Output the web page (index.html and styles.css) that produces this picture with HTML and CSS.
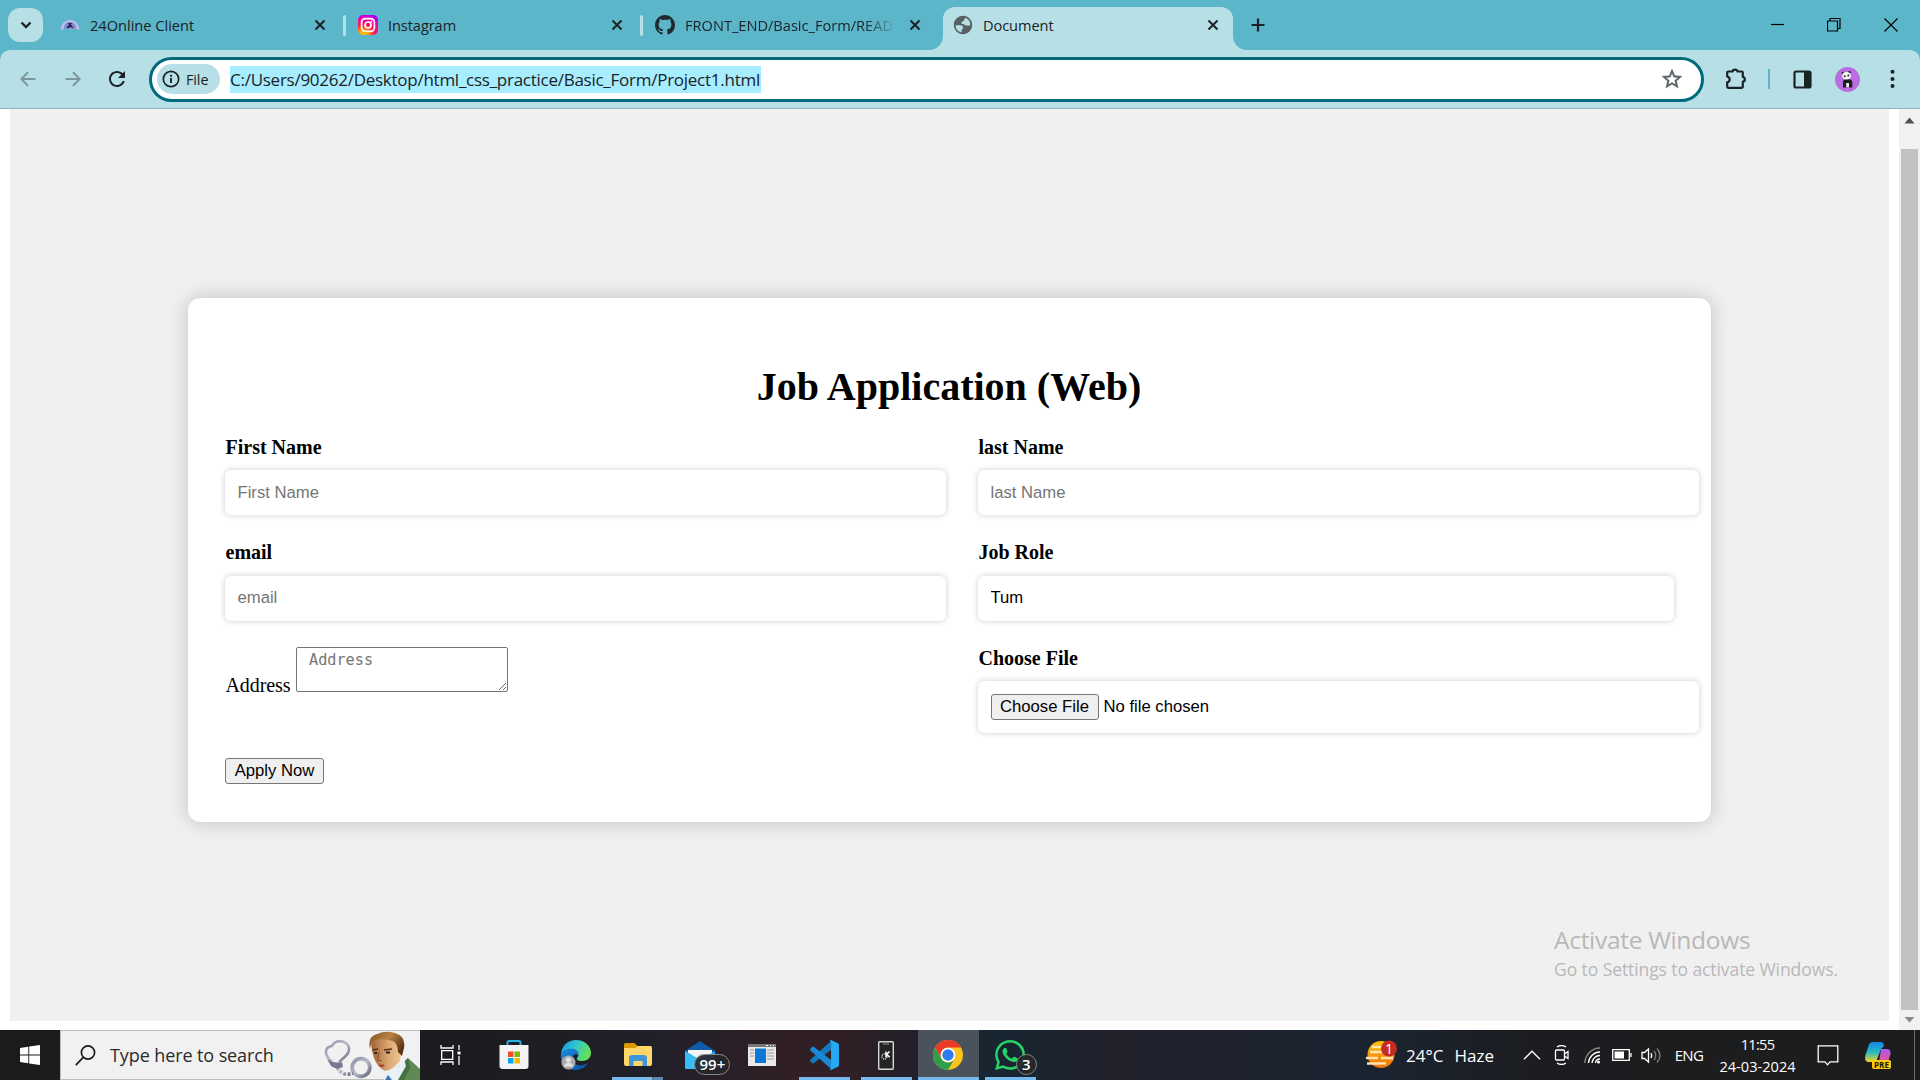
FILE: index.html
```html
<!DOCTYPE html>
<html lang="en">
<head>
<meta charset="utf-8">
<title>Document</title>
<link rel="stylesheet" href="styles.css">
</head>
<body>
<div class="screen">
  <header class="tabstrip">
    <button class="tab-search" aria-label="Search tabs"><svg width="12" height="8" viewBox="0 0 12 8"><path d="M1.5 1.5 6 6l4.500-4.500" fill="none" stroke="#1f2426" stroke-width="2.400"/></svg></button>
    <div class="tab">
      <svg class="favicon" width="20" height="20" viewBox="0 0 20 20"><path d="M.5 15C1 8.500 5 5 10 5s9 3.500 9.500 10l-5-1.500-4.500 1-4.500-1z" fill="#b9bdec"/><path d="M4 13.800c0-4 2-6.800 6-6.800s6 2.800 6 6.800z" fill="#8488cf"/><path d="M7 13l3-4.500 3 4.500-2-1.500-2 1zM8 8.500h4" fill="#23264f" stroke="#23264f" stroke-width=".8"/></svg>
      <span class="tab-title t1">24Online Client</span>
      <svg class="close" viewBox="0 0 16 16"><path d="M3.500 3.500l9 9m0-9l-9 9"/></svg>
    </div>
    <i class="sep"></i>
    <div class="tab">
      <svg class="favicon" width="20" height="20" viewBox="0 0 20 20"><defs><radialGradient id="ig" cx=".25" cy="1.050" r="1.150"><stop offset="0" stop-color="#ffd500"/><stop offset=".25" stop-color="#ff9a00"/><stop offset=".5" stop-color="#ff1a55"/><stop offset=".75" stop-color="#f400a8"/><stop offset="1" stop-color="#a000ff"/></radialGradient></defs><rect width="20" height="20" rx="5" fill="url(#ig)"/><g fill="none" stroke="#fff" stroke-width="1.700"><rect x="3.600" y="3.600" width="12.800" height="12.800" rx="3.800"/><circle cx="10" cy="10" r="3"/></g><circle cx="13.500" cy="6.500" r=".9" fill="#fff"/></svg>
      <span class="tab-title t2">Instagram</span>
      <svg class="close" viewBox="0 0 16 16"><path d="M3.500 3.500l9 9m0-9l-9 9"/></svg>
    </div>
    <i class="sep"></i>
    <div class="tab">
      <svg class="favicon" width="20" height="20" viewBox="0 0 16 16"><path fill="#1f2a30" d="M8 0C3.580 0 0 3.580 0 8c0 3.540 2.290 6.530 5.470 7.590.4.070.55-.17.55-.38 0-.19-.01-.82-.01-1.490-2.010.37-2.530-.49-2.690-.94-.09-.23-.48-.94-.82-1.130-.28-.15-.68-.52-.01-.53.63-.01 1.080.58 1.230.82.72 1.210 1.870.87 2.330.66.070-.52.28-.87.51-1.070-1.780-.2-3.640-.89-3.640-3.950 0-.87.31-1.590.82-2.150-.08-.2-.36-1.020.08-2.120 0 0 .67-.21 2.200.82.64-.18 1.320-.27 2-.27.68 0 1.360.09 2 .27 1.530-1.040 2.200-.82 2.200-.82.44 1.100.16 1.920.08 2.120.51.56.82 1.270.82 2.150 0 3.070-1.870 3.750-3.650 3.950.29.25.54.73.54 1.480 0 1.070-.01 1.930-.01 2.200 0 .21.15.46.55.38A8.013 8.013 0 0016 8c0-4.420-3.580-8-8-8z"/></svg>
      <span class="tab-title t3">FRONT_END/Basic_Form/READ</span>
      <svg class="close" viewBox="0 0 16 16"><path d="M3.500 3.500l9 9m0-9l-9 9"/></svg>
    </div>
    <div class="tab active">
      <svg class="flare" viewBox="0 0 14 14"><path d="M14 0v14H0A14 14 0 0014 0z"/></svg>
      <svg class="favicon globe" width="22" height="22" viewBox="0 0 24 24"><path fill="#5a5f63" d="M12 2C6.480 2 2 6.480 2 12s4.480 10 10 10 10-4.480 10-10S17.520 2 12 2zM4 12.300h5c2.600 0 3 1 3 2.400 0 1.300-.5 1.700-1.500 2.100v3.300C6.500 19.700 3.800 16 4 12.300zm11.200.2c-1.300 0-1.700-1.500-3.100-1.500-1 0-1.800-.4-1.800-1.500 0-1 .8-1.500 1.800-1.600 1.200-.2 1.300-1.200 1.400-2.900l1.700-.7c3.200 1.300 4.900 4.200 4.800 8.200h-2c-.8 0-1.500 0-2.800 0z"/></svg>
      <span class="tab-title t4">Document</span>
      <svg class="close" viewBox="0 0 16 16"><path d="M3.500 3.500l9 9m0-9l-9 9"/></svg>
      <svg class="flare flare-right" viewBox="0 0 14 14"><path d="M0 0v14h14A14 14 0 010 0z"/></svg>
    </div>
    <svg class="new-tab" width="14" height="14" viewBox="0 0 14 14"><path d="M7 .5v13M.5 7h13" stroke="#1b2226" stroke-width="2.200"/></svg>
    <div class="win-controls">
      <svg width="14" height="14" viewBox="0 0 14 14"><path d="M1 6.500h13" /></svg>
      <svg width="14" height="14" viewBox="0 0 14 14"><path d="M.5 3h10v10H.5zM3 3V.5h10v10h-2.500"/></svg>
      <svg width="14" height="14" viewBox="0 0 14 14"><path d="M.5.5l13 13m0-13l-13 13"/></svg>
    </div>
  </header>

  <div class="toolbar-wrap">
  <div class="toolbar">
    <svg class="nav-icon dim" width="16" height="16" viewBox="0 0 16 16"><path d="M15.500 8H1.500M8 1.200L1.300 8 8 14.800"/></svg>
    <svg class="nav-icon dim" width="16" height="16" viewBox="0 0 16 16"><path d="M.5 8h14M8 1.200L14.700 8 8 14.800"/></svg>
    <svg class="reload" width="24" height="24" viewBox="0 0 24 24"><path fill="#1b2226" d="M17.650 6.350C16.200 4.900 14.210 4 12 4c-4.420 0-7.990 3.580-7.990 8s3.570 8 7.990 8c3.730 0 6.840-2.550 7.730-6h-2.080c-.82 2.330-3.040 4-5.650 4-3.310 0-6-2.690-6-6s2.690-6 6-6c1.660 0 3.140.69 4.220 1.780L13 11h7V4l-2.350 2.350z"/></svg>
    <div class="omnibox">
      <div class="chip"><svg width="18" height="18" viewBox="0 0 18 18"><circle cx="9" cy="9" r="7.700" fill="none" stroke="#1b2226" stroke-width="1.700"/><path d="M9 8v5M9 4.800v1.900" stroke="#1b2226" stroke-width="1.900"/></svg><span>File</span></div>
      <span class="url">C:/Users/90262/Desktop/html_css_practice/Basic_Form/Project1.html</span>
      <svg class="star" width="24" height="24" viewBox="0 0 24 24"><path fill="#5c6164" stroke="#5c6164" stroke-width=".4" d="M22 9.240l-7.190-.62L12 2 9.190 8.630 2 9.240l5.460 4.730L5.820 21 12 17.270 18.180 21l-1.630-7.030L22 9.240zM12 15.400l-3.760 2.270 1-4.280-3.320-2.880 4.380-.38L12 6.100l1.710 4.040 4.380.38-3.320 2.880 1 4.280L12 15.400z"/></svg>
    </div>
    <svg class="puzzle" width="22" height="22" viewBox="0 0 22 22"><path d="M2.200 4.500q0-1 1-1H7.500C7.800 1 12.200 1 12.500 3.500h4.300q1 0 1 1V9C20.500 9.300 20.500 13.500 17.800 13.700v5.100q0 1-1 1H3.200q-1 0-1-1v-4.500C5.500 13.500 5.500 9.300 2.200 8.500z" fill="none" stroke="#1b2226" stroke-width="2.200" stroke-linejoin="round"/></svg>
    <i class="tool-sep"></i>
    <svg class="panel" width="19" height="19" viewBox="0 0 19 19"><rect x="1.500" y="1.500" width="16" height="16" rx="1.500" fill="none" stroke="#1b2226" stroke-width="2.200"/><path d="M11 1h6.500v17H11z" fill="#1b2226"/></svg>
    <svg class="avatar" width="25" height="25" viewBox="0 0 25 25"><circle cx="12.500" cy="12.500" r="12.500" fill="#b86ee0"/><path d="M8 20.500V15q0-3 4.500-3t4.800 3v5.500h-3.300V16h-2.700v4.500z" fill="#1c1c1c"/><path d="M11.300 16H14v4h-2.700z" fill="#eee"/><circle cx="8" cy="6" r="1.300" fill="#222"/><circle cx="14.500" cy="5.200" r="1.300" fill="#222"/><ellipse cx="11.500" cy="8.800" rx="4.400" ry="3.800" fill="#f4f4f4"/><circle cx="9.700" cy="9.200" r="1" fill="#222"/><circle cx="13.300" cy="8.600" r="1" fill="#222"/></svg>
    <svg class="dots" width="5" height="20" viewBox="0 0 5 20" fill="#1b2226"><circle cx="2.500" cy="2.700" r="2"/><circle cx="2.500" cy="10" r="2"/><circle cx="2.500" cy="17" r="2"/></svg>
  </div>
  </div>

  <div class="viewport">
    <main class="page">
      <section class="hero">
        <form class="card">
          <h1>Job Application (Web)</h1>
          <div class="fields">
            <div class="field"><label>First Name</label><input type="text" placeholder="First Name"></div>
            <div class="field"><label>last Name</label><input type="text" placeholder="last Name"></div>
            <div class="field"><label>email</label><input type="text" placeholder="email"></div>
            <div class="field"><label>Job Role</label><select><option>Tum</option></select></div>
            <div class="address"><span>Address</span><textarea placeholder=" Address"></textarea></div>
            <div class="field"><label>Choose File</label><input type="file"></div>
          </div>
          <button class="apply" type="button">Apply Now</button>
        </form>
      </section>
    </main>
    <aside class="scrollbar">
      <svg width="21" height="40" viewBox="0 0 21 40"><path d="M5.500 14.500L10.500 8.500l5 6z" fill="#505050"/></svg>
      <div class="thumb"></div>
      <svg width="21" height="20" viewBox="0 0 21 20"><path d="M5.500 7l5 5.500 5-5.500z" fill="#8a8a8a"/></svg>
    </aside>
    <div class="watermark"><p class="wm-title">Activate Windows</p><p class="wm-sub">Go to Settings to activate Windows.</p></div>
  </div>

  <footer class="taskbar">
    <div class="start"><svg width="20" height="20" viewBox="0 0 20 20" fill="#fff"><path d="M0 3l8.300-1.200v7.700H0zM9.200 1.600L20 0v9.500H9.200zM0 10.500h8.300v7.700L0 17zM9.200 10.500H20V20L9.200 18.400z"/></svg></div>
    <div class="search">
      <svg width="21" height="21" viewBox="0 0 21 21"><circle cx="13" cy="7.500" r="6.600" fill="none" stroke="#1c1c1c" stroke-width="1.700"/><path d="M8.500 12.200L.8 20.200" stroke="#1c1c1c" stroke-width="1.700"/></svg>
      <span>Type here to search</span>
      <svg class="doodle" width="100" height="49" viewBox="0 0 100 49">
        <defs><linearGradient id="mt" x1="0" x2="1" y2="1"><stop stop-color="#8d8fa5"/><stop offset=".5" stop-color="#b9bac8"/><stop offset="1" stop-color="#62647c"/></linearGradient>
        <linearGradient id="sk" x1="0" x2="1"><stop stop-color="#9d6238"/><stop offset=".55" stop-color="#dba672"/><stop offset="1" stop-color="#efc896"/></linearGradient>
        <linearGradient id="hr" x1="0" x2="1" y2=".6"><stop stop-color="#7c4b1f"/><stop offset=".5" stop-color="#b98445"/><stop offset="1" stop-color="#5b3210"/></linearGradient></defs>
        <g fill="none" stroke="url(#mt)"><path d="M12 31C3 23 5 16 12 15 16 7 29 10 29 18c0 6-5 8-10 13" stroke-width="2.600"/><circle cx="41" cy="36.500" r="8.800" stroke-width="3.800"/><path d="M17 36q5 10 16 6" stroke-width="3.500" stroke-dasharray="3 1.500"/></g>
        <path d="M7 28q7 5 15 3l1 5q-7 3-12-1z" fill="#777991"/>
        <path d="M65 49l8-9 15-13 12 11v11z" fill="#5f8a54"/><path d="M73 49l5-8 10-14 2 10-6 12z" fill="#45703f"/><path d="M64 49l3-8 12-6 5-7 2 7-8 14z" fill="#e8f0f8"/><path d="M65 49l3-5 4 5z" fill="#3d74b8"/>
        <path d="M51 11q4-6 16-6 14 0 15 8l-2 17-7 7q-6 4-10 2-6-4-9-12-3-8-3-16z" fill="url(#sk)"/>
        <path d="M50 18q-3-12 7-15 9-4 18-1 11 3 9 15l-2 8-4-4q0-8-5-11-9-3-18-1-4 2-5 9z" fill="url(#hr)"/>
        <path d="M53 19l5-1M64 19l8-1" stroke="#532c12" stroke-width="1.600"/><path d="M54.500 22h2.500M66 21.500h4" stroke="#29211d" stroke-width="1.800"/><path d="M59 21l-1.500 8 4 1" fill="none" stroke="#8a5433" stroke-width="1.200"/><path d="M58 34.500q4-2 7 0l-3 1.500z" fill="#9c3a2c"/>
      </svg>
    </div>
    <nav class="apps">
      <div class="app first"><svg width="21" height="20" viewBox="0 0 21 20" fill="none" stroke="#fff" stroke-width="1.300"><path d="M1 0v3h12V0M1 20v-3h12v3M1.700 5.700h11v8.600H1.700zM19 0v5M19 11v9"/><path d="M17.500 6.500h3v3h-3z" fill="#fff" stroke="none"/></svg></div>
      <div class="app"><svg width="30" height="30" viewBox="0 0 30 30"><path d="M8.500 7V2.500q0-1.500 1.500-1.500h10q1.500 0 1.500 1.500V7" fill="none" stroke="#27b1e8" stroke-width="2"/><path d="M.5 5h29v21q0 3-3 3h-23q-3 0-3-3z" fill="#f4f4f4"/><path d="M9 11.500h5.500V17H9z" fill="#f25022"/><path d="M15.500 11.500H21V17h-5.500z" fill="#7fba00"/><path d="M9 18h5.500v5.500H9z" fill="#00a4ef"/><path d="M15.500 18H21v5.500h-5.500z" fill="#ffb900"/></svg></div>
      <div class="app"><svg width="30" height="30" viewBox="0 0 30 30"><defs><linearGradient id="e1" x1="0" x2="1" y2=".3"><stop stop-color="#1593d8"/><stop offset=".5" stop-color="#30c3d5"/><stop offset="1" stop-color="#63df5c"/></linearGradient><linearGradient id="e2" x2="1" y2="1"><stop stop-color="#1b8be0"/><stop offset="1" stop-color="#0b4e9c"/></linearGradient></defs><path d="M0 14C1 5 7 0 15 0c9 0 15 6 15 13 0 5-4 8-9 8-4 0-6-1-5-3 3-3 1-8-4-8C7 10 3 11 0 14z" fill="url(#e1)"/><path d="M0 14c2-4 8-6 12-5 4 0 6 4 5 6-2-2-6 0-6 4 0 5 7 9 16 4-3 5-8 7-12 7C6 30-1 23 0 14z" fill="url(#e2)"/><circle cx="7.500" cy="22.500" r="7" fill="#a9abae"/><circle cx="7.500" cy="20" r="2.600" fill="#e2e2e2"/><path d="M3 26.500c0-5 9-5 9 0z" fill="#e2e2e2"/></svg></div>
      <div class="app open stacked"><svg width="28" height="24" viewBox="0 0 28 24"><path d="M0 1.500Q0 0 1.500 0h9l3 3H26q2 0 2 2v4H0z" fill="#d99a00"/><path d="M0 5h11l3-2h12q2 0 2 2v16q0 2-2 2H2q-2 0-2-2z" fill="#ffd667"/><path d="M5 23v-8q0-3 3-3h12q3 0 3 3v8h-4.500v-5h-9v5z" fill="#3e97dc"/></svg></div>
      <div class="app"><svg width="30" height="30" viewBox="0 0 30 30"><path d="M0 11L15 1l15 10v5H0z" fill="#0f5ba8"/><path d="M3 10h24v12H3z" fill="#f2f4f6"/><path d="M0 11l15 9 15-9v16.500q0 1.500-1.500 1.500h-27Q0 29 0 27.500z" fill="#27a7e8"/><path d="M0 11l30 18H1.500Q0 29 0 27.500z" fill="#35bdf4"/></svg><b class="badge wide">99+</b></div>
      <div class="app"><svg width="28" height="22" viewBox="0 0 28 22"><path d="M0 0h28v22H0z" fill="#e9e9e9"/><path d="M0 0h28v3H0z" fill="#777"/><path d="M18 1.500h2m2 0h1m2 0h1" stroke="#fff"/><path d="M2 6h4M2 9h4M2 12h4M19 6h7M19 9h7M19 12h7M19 15h7" stroke="#999"/><path d="M7 4.500h11v14.500H7z" fill="#0b78d8"/></svg></div>
      <div class="app open"><svg width="30" height="30" viewBox="0 0 30 30"><path d="M22 1L1.500 19.500q-1 1 0 2L3 23q1 .8 2 0L22 10z" fill="#1478be"/><path d="M22 29L1.500 10.500q-1-1 0-2L3 7q1-.8 2 0l17 13z" fill="#1a8ad4"/><path d="M22 0l7 3.300q1 .5 1 1.700v20q0 1.200-1 1.700L22 30q-1 0-1.500-1 1.500.5 1.500-1.500v-25q0-2-1.500-1.500Q21 0 22 0z" fill="#27a9f2"/></svg></div>
      <div class="app open"><svg width="16" height="29" viewBox="0 0 16 29"><rect x=".7" y=".7" width="14.600" height="27.600" rx="1" fill="#242424" stroke="#d8d8d8" stroke-width="1.400"/><circle cx="6.500" cy="15.500" r="2.600" fill="none" stroke="#ccc" stroke-width="1.300" stroke-dasharray="1.300 .9"/><path d="M8 10.500v6M11.500 10.500L8.700 13.300l3 3" fill="none" stroke="#fff" stroke-width="1.500"/><path d="M5 3h6" stroke="#999"/></svg></div>
      <div class="app open current"><svg width="30" height="30" viewBox="0 0 30 30"><circle cx="15" cy="15" r="15" fill="#fcc31e"/><path d="M2 7.500A15 15 0 0128 7.500H15a7.500 7.500 0 00-6.500 11.200z" fill="#e8392b"/><path d="M2 7.500l6.500 11.250A7.500 7.500 0 0021.500 18.750L15 30A15 15 0 012 7.500z" fill="#2f9e4c"/><circle cx="15" cy="15" r="7.300" fill="#fff"/><circle cx="15" cy="15" r="5.700" fill="#2f7bee"/></svg></div>
      <div class="app open"><svg width="30" height="30" viewBox="0 0 24 24"><path fill="#25d366" d="M17.472 14.382c-.297-.149-1.758-.867-2.030-.967-.273-.099-.471-.148-.67.15-.197.297-.767.966-.94 1.164-.173.199-.347.223-.644.075-.297-.15-1.255-.463-2.390-1.475-.883-.788-1.480-1.761-1.653-2.059-.173-.297-.018-.458.13-.606.134-.133.298-.347.446-.52.149-.174.198-.298.298-.497.099-.198.050-.371-.025-.52-.075-.149-.669-1.612-.916-2.207-.242-.579-.487-.5-.669-.51-.173-.008-.371-.01-.57-.01-.198 0-.52.074-.792.372-.272.297-1.040 1.016-1.040 2.479 0 1.462 1.065 2.875 1.213 3.074.149.198 2.096 3.200 5.077 4.487.709.306 1.262.489 1.694.625.712.227 1.360.195 1.871.118.571-.085 1.758-.719 2.006-1.413.248-.694.248-1.289.173-1.413-.074-.124-.272-.198-.57-.347m-5.421 7.403h-.004a9.870 9.870 0 01-5.031-1.378l-.361-.214-3.741.982.998-3.648-.235-.374a9.860 9.860 0 01-1.510-5.260c.001-5.450 4.436-9.884 9.888-9.884 2.640 0 5.122 1.030 6.988 2.898a9.825 9.825 0 012.893 6.994c-.003 5.450-4.437 9.884-9.885 9.884m8.413-18.297A11.815 11.815 0 0012.050 0C5.495 0 .16 5.335.157 11.892c0 2.096.547 4.142 1.588 5.945L.057 24l6.305-1.654a11.882 11.882 0 005.683 1.448h.005c6.554 0 11.890-5.335 11.893-11.893a11.821 11.821 0 00-3.480-8.413z"/></svg><b class="badge">3</b></div>
    </nav>
    <div class="tray">
      <div class="weather"><svg width="32" height="30" viewBox="0 0 32 30"><defs><linearGradient id="sun" x2="0" y2="1"><stop stop-color="#ffc400"/><stop offset="1" stop-color="#f07010"/></linearGradient></defs><circle cx="15" cy="14.500" r="13.500" fill="url(#sun)"/><path d="M6 7h10M4 12h14M0 18h12M15 18h12M1 23.500h19" stroke="#ffe3b0" stroke-width="2.300"/><circle cx="23" cy="8.500" r="8" fill="#c62b21"/><text x="23" y="13.500" text-anchor="middle" class="alert">1</text></svg><span class="temp">24°C</span><span class="haze">Haze</span></div>
      <div class="cell"><svg width="18" height="10" viewBox="0 0 18 10"><path d="M1 9.200L9 1.200l8 8"/></svg></div>
      <div class="cell"><svg width="16" height="20" viewBox="0 0 16 20"><rect x="1.500" y="5" width="9" height="10" rx="1"/><path d="M10.500 9l3.500-2.500v7L10.500 11M3 2q4.500-3 9 0M3 18q4.500 3 9 0"/></svg></div>
      <div class="cell"><svg width="17" height="17" viewBox="0 0 17 17"><path d="M.8 16A15.500 15.500 0 0116 1" stroke="#8b8b8b"/><path d="M4.500 16A11.500 11.500 0 0116 5M8 16a8 8 0 018-7.500"/><path d="M11.500 16a4.500 4.500 0 014.500-4"/><circle cx="14.500" cy="15" r="1.500" fill="#fff" stroke="none"/></svg></div>
      <div class="cell narrow"><svg width="20" height="12" viewBox="0 0 20 12"><path d="M.7.7h16.600v10.600H.7zM19 4v4"/><path d="M2.500 2.500h9.500v7H2.500z" fill="#fff" stroke="none"/></svg></div>
      <div class="cell"><svg width="21" height="17" viewBox="0 0 21 17"><path d="M1 5.500h2.500L7.500 2v13L3.500 11.500H1z"/><path d="M10 6q1.500 2.500 0 5"/><path d="M13 4q3.500 4.500 0 9M16 1.500q6 7 0 14" stroke="#808080"/></svg></div>
      <span class="lang">ENG</span>
      <div class="clock"><span class="time">11:55</span><span class="date">24-03-2024</span></div>
      <div class="note"><svg width="22" height="21" viewBox="0 0 22 21"><path d="M1.200.8h19.600v16H13l-2.500 3-2.500-3H1.200z"/></svg></div>
      <div class="copilot"><svg width="26" height="26" viewBox="0 0 26 26"><defs><linearGradient id="c1" x2="0" y2="1"><stop stop-color="#1686e8"/><stop offset=".5" stop-color="#25b9c4"/><stop offset="1" stop-color="#f4d51c"/></linearGradient><linearGradient id="c2" x2="0" y2="1"><stop stop-color="#a55cf0"/><stop offset="1" stop-color="#f0568e"/></linearGradient></defs><path d="M7 0h9q2.500 0 3 4l-3 3-5 13H3q-4-1-2.500-7L4 2.500Q5 0 7 0z" fill="url(#c1)"/><path d="M16 7h6q4 0 3.500 5l-2.500 8h-9z" fill="url(#c2)"/></svg><b class="pre">PRE</b></div>
      <i class="peek"></i>
    </div>
  </footer>
</div>
</body>
</html>
```
FILE: styles.css
```css
* { box-sizing: border-box; }
body { margin: 0; overflow: hidden; font-family: "Open Sans", "Noto Sans", sans-serif; color: #1b2226; }
p, h1 { margin: 0; }
svg { display: block; flex: none; }
.screen { width: 1920px; height: 1080px; display: flex; flex-direction: column; overflow: hidden; background: #fff; }

/* tab strip */
.tabstrip { height: 50px; background: #5cb6c9; display: flex; align-items: center; padding-left: 8px; flex: none; }
.tab-search { width: 35px; height: 34px; border: 0; padding: 0; border-radius: 12px; background: #b7e0e6; display: grid; place-items: center; margin-right: 6px; }
.tab { position: relative; width: 294px; height: 50px; display: flex; align-items: center; padding: 0 15px 8px 11px; gap: 10px; font-size: 14.600px; }
.favicon { position: relative; top: 4px; }
.close { position: relative; top: 4px; width: 16px; height: 16px; margin-left: auto; stroke: #1b2226; stroke-width: 2; }
.tab-title { position: relative; top: 4px; white-space: nowrap; line-height: 22px; }
.t2, .t4 { letter-spacing: -.08px; }
.t3 { width: 208px; overflow: hidden; -webkit-mask-image: linear-gradient(90deg, #000 178px, transparent 212px); }
.sep { width: 3px; height: 21px; border-radius: 2px; background: #b7e0e6; }
.sep + .tab { padding-left: 12px; }
.tab:nth-of-type(3) { width: 300px; padding-right: 20px; }
.tab.active { width: 290px; height: 43px; align-self: flex-end; background: #b7e0e6; border-radius: 12px 12px 0 0; padding: 0 12px 15px 9px; gap: 9px; }
.flare { position: absolute; width: 14px; height: 14px; left: -14px; bottom: 0; fill: #b7e0e6; }
.flare-right { left: auto; right: -14px; }
.new-tab { margin-left: 18px; }
.win-controls { margin-left: auto; display: flex; gap: 43px; margin-right: 22px; }
.win-controls svg { fill: none; stroke: #000; stroke-width: 1.200; }

/* toolbar */
.toolbar-wrap { height: 59px; background: #5cb6c9; flex: none; }
.toolbar { height: 59px; display: flex; align-items: center; background: #b7e0e6; border-bottom: 1px solid #8fb4bc; border-radius: 10px 10px 0 0; padding-left: 20px; }
.nav-icon { fill: none; stroke-width: 2; margin-right: 29px; }
.dim { stroke: #7c989e; }
.reload { margin: 0 20px 0 -5px; }
.omnibox { width: 1555px; height: 45px; border: 3px solid #006b7b; border-radius: 23px; background: #fff; display: flex; align-items: center; padding: 0 17px 0 5px; }
.chip { width: 63px; height: 30px; border-radius: 15px; background: #b7e0e6; display: flex; align-items: center; gap: 6px; padding-left: 5px; font-size: 14.400px; letter-spacing: -.1px; margin-right: 10px; }
.url { font-size: 17px; line-height: 27px; height: 27px; background: #a6edff; width: 531px; letter-spacing: -.26px; white-space: nowrap; }
.star { margin-left: auto; }
.puzzle { margin-left: 21px; }
.tool-sep { width: 2px; height: 20px; background: #5cb6c9; margin-left: 21px; }
.panel { margin-left: 23px; }
.avatar { margin-left: 23px; }
.dots { margin-left: 30px; }

/* page */
.viewport { position: relative; height: 921px; display: flex; flex: none; }
.page { flex: 1; padding: 0 10px 9px; background: #fff; }
.hero { height: 912px; background: #f0f0f0; padding: 189px 0 0 178px; }
.card { width: 1523px; height: 524px; background: #fff; border-radius: 12.500px; padding: 37.500px 38px 37.500px 37px; box-shadow: 0 0 20px rgba(0, 0, 0, .2); font-family: "Liberation Serif", serif; font-size: 20px; color: #000; }
.card h1 { font-size: 40px; line-height: 45px; text-align: center; padding-top: 28px; height: 100px; }
.fields { display: grid; grid-template-columns: 696px 696px; column-gap: 57px; row-gap: 26px; }
.field label { display: block; font-weight: bold; line-height: 23px; padding-left: .5px; margin-bottom: 11.500px; }
.field input, .field select { display: block; width: 721px; height: 45px; border: 0; border-radius: 6px; background: #fff; padding: 0 12.500px; box-shadow: 0 0 6px rgba(0, 0, 0, .2); font: 16.667px "Liberation Sans", sans-serif; color: #000; outline: 0; }
.field input::placeholder, textarea::placeholder { color: #757575; }
.field select { appearance: none; width: 696px; padding-bottom: 1px; }
.field input[type="file"] { height: 52px; padding: 13px 12.500px; }
.field input::file-selector-button { font: 16.667px "Liberation Sans", sans-serif; width: 108px; height: 26px; padding: 0 6px; border: 1.250px solid #767676; border-radius: 3px; background: #efefef; margin: 0 5px 0 0; }
.address { display: flex; align-items: flex-start; gap: 6px; padding-left: .5px; }
.address span { padding-top: 27px; line-height: 23px; letter-spacing: -.1px; }
textarea { width: 212px; height: 45px; margin: 0; padding: 2.500px; border: 1px solid #767676; border-radius: 2px; background: #fff; font: 15.200px/20px "DejaVu Sans Mono", monospace; }
.apply { display: block; width: 99px; height: 26px; margin-top: 25px; padding: 0; border: 1px solid #767676; border-radius: 3px; background: #efefef; color: #000; font: 16.667px "Liberation Sans", sans-serif; }
.scrollbar { width: 21px; background: #f1f1f1; display: flex; flex-direction: column; align-items: center; }
.thumb { width: 17px; height: 861px; background: #c1c1c1; }
.watermark { position: absolute; left: 1554px; top: 814px; color: #b8b8b8; white-space: nowrap; }
.wm-title { font-size: 24.500px; line-height: 34px; letter-spacing: -.3px; }
.wm-sub { font-size: 17.500px; line-height: 25px; letter-spacing: -.08px; }

/* taskbar */
.taskbar { height: 50px; flex: none; display: flex; background: linear-gradient(90deg, #1b1b1c 0, #1c1c20 480px, #20202a 650px, #301f25 790px, #301f25 850px, #20202a 920px, #172631 1000px, #20202a 1110px, #1a2431 1370px, #1c1d20 1530px, #1d1d1d 1920px); color: #fff; }
.start { width: 60px; display: grid; place-items: center; }
.search { width: 360px; background: #f1f1f1; border: 1px solid #bdbdbd; border-right: 0; color: #2b2b2b; display: flex; align-items: center; padding-left: 14px; font-size: 18px; letter-spacing: -.1px; }
.search span { margin-left: 14px; }
.doodle { margin-left: auto; }
.apps { display: flex; gap: 1.100px; }
.app { position: relative; width: 61px; height: 50px; display: grid; place-items: center; }
.app.first { width: 60px; margin-right: 2px; }
.app.open::after { content: ""; position: absolute; left: 5px; right: 5px; bottom: 0; height: 3px; background: #76b9ed; }
.app.stacked::after { background: linear-gradient(90deg, #76b9ed 40px, #3d5670 40px, #5b89ae 41px); }
.app.current { background: #4a535b; }
.app.current::after { left: 0; right: 0; }
.badge { position: absolute; right: 4px; bottom: 5px; width: 21px; height: 21px; border-radius: 11px; border: 1px solid #888; background: rgba(38, 38, 42, .92); font-size: 15px; line-height: 19px; text-align: center; font-weight: 600; }
.badge.wide { width: 36px; right: 0; }
.tray { margin-left: auto; display: flex; align-items: center; }
.tray svg { fill: none; stroke: #fff; stroke-width: 1.300; }
.weather { display: flex; align-items: center; width: 151px; font-size: 17px; }
.weather svg, .copilot svg { stroke-width: 0; }
.weather svg path[stroke] { stroke-width: 2.300; }
.alert { font: 14px "Open Sans", sans-serif; fill: #fff; }
.temp { margin-left: 8px; }
.haze { margin-left: 11px; }
.cell { width: 30px; display: grid; place-items: center; }
.cell.narrow { width: 29px; }
.lang { width: 46px; text-align: center; font-size: 15px; letter-spacing: -.6px; }
.clock { width: 91px; display: flex; flex-direction: column; align-items: center; font-size: 14.600px; line-height: 22px; }
.time { letter-spacing: -.7px; }
.note { width: 50px; display: grid; place-items: center; }
.copilot { position: relative; width: 50px; display: grid; place-items: center; }
.pre { position: absolute; right: 12px; bottom: -1px; width: 19px; height: 9px; background: #ffc814; border-radius: 2px; color: #221a00; font-size: 8px; line-height: 9px; text-align: center; }
.peek { width: 1px; height: 50px; background: #6b6b6b; margin: 0 5px 0 11px; }
```
